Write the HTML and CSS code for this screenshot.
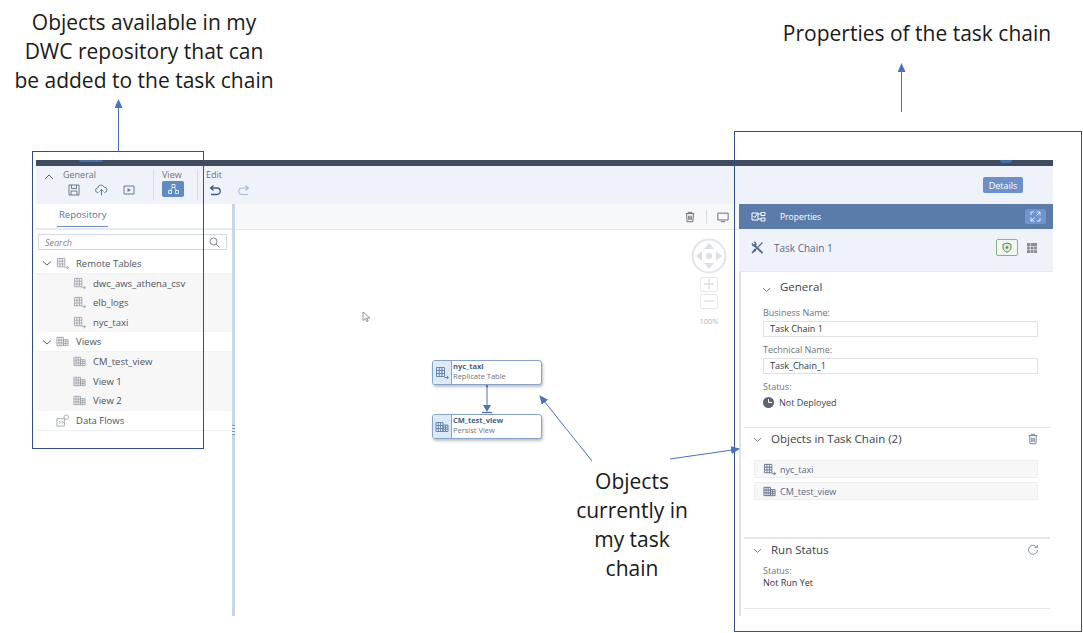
FILE: index.html
```html
<!DOCTYPE html>
<html lang="en">
<head>
  <meta charset="UTF-8" />
  <title>Task chain editor</title>
  <link rel="stylesheet" href="styles.css">
</head>
<body>
  <svg class="icon-defs" width="0" height="0">
    <symbol id="i-remote" viewBox="0 0 14 14">
      <path d="M1.5 1.5h8v9h-8zM1.5 4.5h8M1.500 7.5h8M4.200 1.500v9M6.900 1.500v9M9.500 11.500h4M11.800 9.800l1.700 1.700-1.700 1.700" fill="none" stroke="currentColor" stroke-width=".9"/>
    </symbol>
    <symbol id="i-view" viewBox="0 0 14 14">
      <path d="M1 2.500h7v9H1zM1 5.500h7M1 8.500h7M3.300 2.500v9M5.600 2.500v9M8 5h5v6.500H8zM8 7.200h5M8 9.300h5M10.500 5v6.500" fill="none" stroke="currentColor" stroke-width=".9"/>
    </symbol>
    <symbol id="i-flow" viewBox="0 0 14 14">
      <path d="M1 5h8v8H1zM3 7.500l2 1.500-2 1.500M6 7.500l2 1.500-2 1.500" fill="none" stroke="currentColor" stroke-width=".9"/>
      <circle cx="11" cy="3.500" r="2.400" fill="none" stroke="currentColor" stroke-width=".9"/>
    </symbol>
    <symbol id="i-trash" viewBox="0 0 14 14">
      <path d="M2 3h10M5 3V1.500h4V3M3 3l.6 9.500h6.800L11 3M5.500 5.500v5M7 5.500v5M8.500 5.500v5" fill="none" stroke="currentColor" stroke-width="1.100"/>
    </symbol>
    <symbol id="i-chevron" viewBox="0 0 10 10">
      <path d="M1 3.500l4 3.500 4-3.500" fill="none" stroke="currentColor" stroke-width="1"/>
    </symbol>
  </svg>

  <div class="app">
    <div class="shell-bar">
      <span class="shell-mark mark-left"></span>
      <span class="shell-mark mark-right"></span>
    </div>

    <div class="toolbar">
      <svg class="tool-chevron" width="10" height="10" viewBox="0 0 10 10"><path d="M1 7l4-4 4 4" fill="none" stroke="currentColor" stroke-width="1"/></svg>
      <div class="tool-group group-general">
        <span class="tool-label">General</span>
        <div class="tool-icons">
          <svg width="12" height="12" viewBox="0 0 12 12"><path d="M1 1h10v10H1zM3.500 1v3.500h5V1M3 11V7h6v4" fill="none" stroke="currentColor"/></svg>
          <svg width="13" height="12" viewBox="0 0 13 12"><path d="M3.500 8.500H3a2.300 2.300 0 0 1-.3-4.600 3.400 3.400 0 0 1 6.500-.7A2.700 2.700 0 0 1 10 8.500h-.5M6.500 11.500V5.500M4.500 7.500l2-2 2 2" fill="none" stroke="currentColor"/></svg>
          <svg width="12" height="12" viewBox="0 0 12 12"><path d="M1 2h10v8H1z" fill="none" stroke="currentColor"/><path d="M4.500 4l3.500 2-3.500 2z" fill="currentColor"/></svg>
        </div>
      </div>
      <div class="tool-group group-view">
        <span class="tool-label">View</span>
        <div class="tool-btn">
          <svg width="11" height="10" viewBox="0 0 11 10"><path d="M4 .5h3v3H4zM.5 6.500h3v3h-3zM7.500 6.500h3v3h-3zM4.500 3.500l-2 3M6.500 3.500l2 3" fill="none" stroke="currentColor" stroke-width=".8"/></svg>
        </div>
      </div>
      <div class="tool-group group-edit">
        <span class="tool-label">Edit</span>
        <div class="tool-icons">
          <svg class="undo" width="12" height="12" viewBox="0 0 12 12"><path d="M4.500 1.500L1.500 4l3 2.500M1.500 4H8a2.700 2.700 0 0 1 0 6.500H2" fill="none" stroke="currentColor" stroke-width="1.300"/></svg>
          <svg class="redo" width="12" height="12" viewBox="0 0 12 12"><path d="M7.500 1.500l3 2.500-3 2.500M10.500 4H4a2.700 2.700 0 0 0 0 6.500h6" fill="none" stroke="currentColor" stroke-width="1.100"/></svg>
        </div>
      </div>
      <button class="details-btn">Details</button>
    </div>

    <div class="workspace">
      <aside class="repo">
        <div class="repo-tabs"><span class="repo-tab">Repository</span></div>
        <div class="repo-search">
          <span>Search</span>
          <svg width="11" height="11" viewBox="0 0 11 11"><circle cx="4.500" cy="4.500" r="3.500" fill="none" stroke="currentColor"/><path d="M7 7l3.500 3.500" stroke="currentColor"/></svg>
        </div>
        <ul class="tree">
          <li class="tree-row parent">
            <svg class="tree-chevron"><use href="#i-chevron"/></svg>
            <svg class="tree-icon"><use href="#i-remote"/></svg>Remote Tables
          </li>
          <li class="tree-row child"><svg class="tree-icon"><use href="#i-remote"/></svg>dwc_aws_athena_csv</li>
          <li class="tree-row child"><svg class="tree-icon"><use href="#i-remote"/></svg>elb_logs</li>
          <li class="tree-row child"><svg class="tree-icon"><use href="#i-remote"/></svg>nyc_taxi</li>
          <li class="tree-row parent">
            <svg class="tree-chevron"><use href="#i-chevron"/></svg>
            <svg class="tree-icon"><use href="#i-view"/></svg>Views
          </li>
          <li class="tree-row child"><svg class="tree-icon"><use href="#i-view"/></svg>CM_test_view</li>
          <li class="tree-row child"><svg class="tree-icon"><use href="#i-view"/></svg>View 1</li>
          <li class="tree-row child"><svg class="tree-icon"><use href="#i-view"/></svg>View 2</li>
          <li class="tree-row parent no-chevron"><svg class="tree-icon"><use href="#i-flow"/></svg>Data Flows</li>
        </ul>
        <span class="repo-grip"></span>
      </aside>

      <main class="canvas">
        <div class="canvas-bar">
          <svg class="bar-icon"><use href="#i-trash"/></svg>
          <span class="bar-sep"></span>
          <svg class="bar-icon" viewBox="0 0 14 14"><path d="M1 2.500h12v8H1zM4.500 12.500h5" fill="none" stroke="currentColor" stroke-width="1.100"/></svg>
        </div>

        <div class="nav-control">
          <svg width="36" height="36" viewBox="0 0 36 36">
            <circle cx="18" cy="18" r="16.500" fill="#fff" stroke="#e3e5e8" stroke-width="2"/>
            <path d="M18 5l5 6H13zM18 31l5-6H13zM5 18l6-5v10zM31 18l-6-5v10z" fill="#dcdfe3"/>
            <circle cx="18" cy="18" r="3" fill="#dcdfe3"/>
          </svg>
          <div class="zoom-btn">
            <svg width="12" height="12" viewBox="0 0 12 12"><path d="M6 1v10M1 6h10" stroke="#dcdfe3" stroke-width="1.400"/></svg>
          </div>
          <div class="zoom-btn">
            <svg width="12" height="12" viewBox="0 0 12 12"><path d="M1 6h10" stroke="#dcdfe3" stroke-width="1.400"/></svg>
          </div>
          <span class="zoom-level">100%</span>
        </div>

        <div class="flow">
          <div class="node">
            <div class="node-icon"><svg width="14" height="14"><use href="#i-remote"/></svg></div>
            <div class="node-text"><b>nyc_taxi</b><span>Replicate Table</span></div>
          </div>
          <svg class="link" width="12" height="29" viewBox="0 0 12 29">
            <circle cx="6" cy="1" r="1.200" fill="#4f74ad"/>
            <path d="M6 1v22" stroke="#4f74ad"/>
            <path d="M2 20h8L6 27z" fill="#4f74ad"/>
            <path d="M1 27.500h10" stroke="#4f74ad" stroke-width="1.400"/>
          </svg>
          <div class="node">
            <div class="node-icon"><svg width="14" height="14"><use href="#i-view"/></svg></div>
            <div class="node-text"><b>CM_test_view</b><span>Persist View</span></div>
          </div>
        </div>

        <svg class="cursor" width="10" height="12" viewBox="0 0 10 12"><path d="M1 1v8.500l2.300-2 1.600 3.200 1.300-.7-1.600-3H8z" fill="#fff" stroke="#7a7f86" stroke-width=".8"/></svg>
      </main>

      <aside class="props">
        <header class="props-head">
          <svg class="props-head-icon" width="16" height="14" viewBox="0 0 16 14"><path d="M1 3h6v7H1zM2.500 6l1.300 1.500L6.500 3.500M7 4h3M7 9h3M10 2.500h4v3h-4zM10 8h4v3h-4z" fill="none" stroke="currentColor"/></svg>
          <span>Properties</span>
          <div class="expand-btn">
            <svg width="11" height="11" viewBox="0 0 11 11"><path d="M6.500 1H10v3.500M10 1L6.500 4.500M4.500 10H1V6.500M1 10l3.500-3.500M1 4V1h3M10 7v3H7" fill="none" stroke="currentColor" stroke-width=".8"/></svg>
          </div>
        </header>
        <div class="props-sub">
          <svg class="tools-icon" width="13" height="13" viewBox="0 0 13 13">
            <path d="M3.500 4.500l8 7.500" fill="none" stroke="currentColor" stroke-width="1.800"/>
            <path d="M1 1.800l1.800 1.700L4 2.400 2.300.7A2.600 2.600 0 0 1 5.500 4L4 5.500A2.600 2.600 0 0 1 1 1.800z" fill="currentColor"/>
            <path d="M11.500 1.500L3 10M1 12l2.500-3.500 1 1z" fill="none" stroke="currentColor" stroke-width="1.200"/>
          </svg>
          <span class="props-title">Task Chain 1</span>
          <div class="deploy-badge">
            <svg width="10" height="11" viewBox="0 0 10 11"><path d="M5 1l4 1.300V6c0 2-2 3.500-4 4.200C3 9.500 1 8 1 6V2.300z" fill="#dfe9d8" stroke="#5f8a4c"/><circle cx="5" cy="5.500" r="1.300" fill="#5f8a4c"/></svg>
          </div>
          <svg class="grid-icon" width="10" height="10" viewBox="0 0 10 10"><path d="M0 0h10v10H0z" fill="#8a9099"/><path d="M3.500 0v10M0 3.500h10M0 6.700h10M6.700 3.500v6.500" stroke="#eff3f9" stroke-width=".6"/></svg>
        </div>

        <section class="sect sect-general">
          <h3 class="sect-title"><svg class="sect-chevron"><use href="#i-chevron"/></svg>General</h3>
          <label class="field-label">Business Name:</label>
          <div class="field-input">Task Chain 1</div>
          <label class="field-label">Technical Name:</label>
          <div class="field-input">Task_Chain_1</div>
          <label class="field-label status-label">Status:</label>
          <div class="status-value">
            <svg width="11" height="11" viewBox="0 0 11 11"><circle cx="5.500" cy="5.500" r="5.500" fill="#5b6470"/><path d="M5.500 2v3.500h3.500" fill="none" stroke="#fff"/></svg>
            Not Deployed
          </div>
        </section>

        <section class="sect sect-objects">
          <h3 class="sect-title">
            <svg class="sect-chevron"><use href="#i-chevron"/></svg>Objects in Task Chain (2)
            <svg class="sect-action"><use href="#i-trash"/></svg>
          </h3>
          <div class="object-row"><svg class="object-icon"><use href="#i-remote"/></svg>nyc_taxi</div>
          <div class="object-row"><svg class="object-icon"><use href="#i-view"/></svg>CM_test_view</div>
        </section>

        <section class="sect sect-run">
          <h3 class="sect-title">
            <svg class="sect-chevron"><use href="#i-chevron"/></svg>Run Status
            <svg class="sect-action" viewBox="0 0 14 14"><path d="M11.500 4A5.300 5.300 0 1 0 12.300 7M12 1v3.200H8.800" fill="none" stroke="currentColor"/></svg>
          </h3>
          <label class="field-label">Status:</label>
          <div class="run-value">Not Run Yet</div>
        </section>
      </aside>
    </div>
  </div>

  <!-- slide callouts drawn over the screenshot -->
  <p class="note note-repo">Objects available in my<br>DWC repository that can<br>be added to the task chain</p>
  <p class="note note-props">Properties of the task chain</p>
  <p class="note note-current">Objects<br>currently in<br>my task<br>chain</p>

  <div class="callout-box box-repo"></div>
  <div class="callout-box box-props"></div>

  <svg class="arrows" width="1083" height="633" viewBox="0 0 1083 633">
    <defs>
      <marker id="head" markerWidth="9" markerHeight="8" refX="8" refY="4" orient="auto" markerUnits="userSpaceOnUse">
        <path d="M0 0l9 4-9 4z" fill="#4472c4"/>
      </marker>
    </defs>
    <g stroke="#4472c4" fill="none">
      <path d="M118.500 151V100" marker-end="url(#head)"/>
      <path d="M901.500 112V64" marker-end="url(#head)"/>
      <path d="M592 461L540 396" marker-end="url(#head)"/>
      <path d="M670 459L739 449" marker-end="url(#head)"/>
    </g>
  </svg>
</body>
</html>
```

FILE: styles.css
```css
* {
  box-sizing: border-box;
}
html, body {
  margin: 0;
  height: 100%;
}
body {
  position: relative;
  width: 1083px;
  height: 633px;
  overflow: hidden;
  background: white;
  font-family: "Open Sans", "Liberation Sans", sans-serif;
  font-size: 9.5px;
  color: #4a5361;
}
.icon-defs {
  position: absolute;
}

/* app screenshot */
.app {
  display: flex;
  flex-direction: column;
  width: 1017px;
  height: 456px;
  margin: 160px 0 0 36px;
}
.shell-bar {
  position: relative;
  flex: none;
  height: 6px;
  background: #3f4b5e;
}
.shell-mark {
  position: absolute;
  top: 0;
  height: 2px;
  border-radius: 0 0 6px 6px;
  background: #3f6fb5;
}
.mark-left {
  left: 43px;
  width: 24px;
}
.mark-right {
  left: 964px;
  width: 12px;
  height: 3px;
}

.toolbar {
  flex: none;
  display: flex;
  height: 38px;
  padding: 3px 30px 0 8px;
  background: #eff3f9;
}
.tool-chevron {
  margin: 3px 8px 0 0;
  color: #5a6472;
}
.tool-group {
  display: flex;
  flex-direction: column;
  height: 31px;
  border-right: 1px solid #d8dde5;
}
.tool-label {
  font-size: 9px;
  line-height: 11px;
  color: #6d7480;
}
.tool-icons {
  display: flex;
  align-items: center;
  margin-top: 4px;
  color: #6a7b90;
}
.group-general {
  width: 91px;
  margin-left: 1px;
}
.group-general .tool-icons {
  gap: 15px;
  padding-left: 5px;
}
.group-view {
  width: 44px;
  padding-left: 8px;
}
.tool-btn {
  display: flex;
  align-items: center;
  justify-content: center;
  width: 22px;
  height: 16px;
  margin-top: 1px;
  border-radius: 2px;
  background: #5f8ac6;
  color: white;
}
.group-edit {
  width: 60px;
  padding-left: 8px;
  border: none;
}
.group-edit .tool-icons {
  gap: 17px;
  padding-left: 3px;
}
.undo {
  color: #3e5c86;
}
.redo {
  color: #a9bbd3;
}
.details-btn {
  height: 16px;
  width: 40px;
  margin: 8px 0 0 auto;
  padding: 0;
  border: none;
  border-radius: 2px;
  background: #6a91cb;
  color: white;
  font: 9px "Open Sans", sans-serif;
}

.workspace {
  flex: 1;
  display: flex;
  min-height: 0;
}

/* repository panel */
.repo {
  position: relative;
  flex: none;
  width: 199px;
  border-right: 3px solid #c9d6e8;
  background: white;
}
.repo-grip {
  position: absolute;
  top: 221px;
  right: -3px;
  width: 3px;
  height: 10px;
  background: repeating-linear-gradient(#8a94a3 0 1px, #e8ecf1 1px 3px);
}
.repo-tabs {
  height: 26px;
  padding-left: 21px;
  border-bottom: 2px solid #e6ebf2;
}
.repo-tab {
  display: inline-block;
  height: 23px;
  padding: 4px 2px 0;
  border-bottom: 1px solid #6f8fbd;
  font-size: 9.500px;
  color: #55729f;
}
.repo-search {
  display: flex;
  align-items: center;
  justify-content: space-between;
  width: 189px;
  height: 16px;
  margin: 4px 0 4px 2px;
  padding: 0 6px;
  border: 1px solid #d5d9df;
  background: white;
  font-style: italic;
  font-size: 9px;
  color: #7b838e;
}
.tree {
  list-style: none;
  margin: 0;
  padding: 0;
  border-bottom: 1px solid #edf0f3;
}
.tree-row {
  display: flex;
  align-items: center;
  height: 19.600px;
}
.tree-row.parent {
  padding-left: 6px;
  border-bottom: 1px solid #f0f2f5;
  background: white;
}
.tree-row.child {
  padding-left: 37px;
  background: #f7f7f7;
}
.tree-row.no-chevron {
  padding-left: 20px;
  border: none;
}
.tree-chevron {
  width: 10px;
  height: 10px;
  margin-right: 4px;
  color: #5a6472;
}
.tree-icon {
  width: 13px;
  height: 13px;
  margin-right: 7px;
  color: #9aa0a8;
}

/* canvas */
.canvas {
  position: relative;
  flex: none;
  width: 504px;
  background: white;
}
.canvas-bar {
  display: flex;
  align-items: center;
  justify-content: flex-end;
  height: 26px;
  padding-right: 10px;
  border-bottom: 1px solid #e3e7ec;
  background: #f7f8fa;
  color: #5f6b7a;
}
.bar-icon {
  width: 12px;
  height: 12px;
}
.bar-sep {
  width: 1px;
  height: 14px;
  margin: 0 10px;
  background: #d9dde2;
}
.nav-control {
  position: absolute;
  top: 34px;
  left: 456px;
  display: flex;
  flex-direction: column;
  align-items: center;
  width: 36px;
}
.zoom-btn {
  display: flex;
  align-items: center;
  justify-content: center;
  width: 18px;
  height: 15px;
  margin-top: 2px;
  border: 1px solid #e6e8eb;
  border-radius: 2px;
}
.nav-control svg:first-child {
  margin-bottom: 1px;
}
.zoom-level {
  margin-top: 7px;
  font-size: 7.500px;
  color: #a9b6c8;
}
.flow {
  position: absolute;
  top: 156px;
  left: 197px;
  display: flex;
  flex-direction: column;
  align-items: center;
  width: 110px;
}
.node {
  display: flex;
  width: 110px;
  height: 25px;
  border: 1px solid #86a3c9;
  border-radius: 3px;
  background: white;
  box-shadow: 1px 2px 3px rgba(0, 0, 0, 0.25);
  overflow: hidden;
}
.node-icon {
  display: flex;
  align-items: center;
  justify-content: center;
  flex: none;
  width: 19px;
  border-right: 1px solid #86a3c9;
  background: #dce9f6;
  color: #5d7ea8;
}
.node-text {
  display: flex;
  flex-direction: column;
  padding: 1px 0 0 1px;
  font-size: 7.500px;
  line-height: 9.500px;
  color: #6d7480;
}
.node-text b {
  color: #3f5f8f;
}
.link {
  display: block;
  margin-left: -1px;
}
.cursor {
  position: absolute;
  top: 107px;
  left: 127px;
}

/* properties panel */
.props {
  flex: none;
  width: 314px;
  border-left: 2px solid #dfe1e4;
  background: white;
}
.props-head {
  display: flex;
  align-items: center;
  height: 25px;
  margin-left: -2px;
  padding: 0 7px 0 12px;
  background: #5b7cab;
  color: white;
  font-size: 8.500px;
}
.props-head-icon {
  margin-right: 13px;
}
.expand-btn {
  display: flex;
  align-items: center;
  justify-content: center;
  width: 21px;
  height: 15px;
  margin-left: auto;
  border-radius: 2px;
  background: #6f95cf;
}
.props-sub {
  display: flex;
  align-items: center;
  height: 43px;
  margin-left: -2px;
  padding: 0 16px 5px 12px;
  border-bottom: 1px solid #e6eaf0;
  background: #eff3f9;
  color: #55698a;
}
.tools-icon {
  margin-right: 10px;
}
.props-title {
  font-size: 10px;
}
.deploy-badge {
  display: flex;
  align-items: center;
  justify-content: center;
  width: 22px;
  height: 17px;
  margin-left: auto;
  border: 1px solid #8fb07e;
  border-radius: 2px;
  background: #f2f7ef;
}
.grid-icon {
  margin-left: 9px;
}

.sect {
  margin-left: 3px;
  margin-right: 3px;
  border-bottom: 1px solid #e4e6e9;
}
.sect-title {
  position: relative;
  display: flex;
  align-items: center;
  margin: 0;
  font-weight: normal;
  font-size: 11.500px;
  line-height: 14px;
  color: #3a414c;
}
.sect-chevron {
  flex: none;
  width: 9px;
  height: 9px;
  margin-right: 9px;
  color: #6d7480;
}
.sect-action {
  width: 12px;
  height: 12px;
  margin-left: auto;
  margin-right: 11px;
  color: #6f8096;
}
.sect-general {
  height: 156px;
  padding: 7px 0 0 19px;
}
.sect-general .sect-title {
  margin-left: -1px;
  margin-bottom: 13px;
}
.sect-general .sect-chevron {
  margin-top: 6px;
}
.field-label {
  display: block;
  font-size: 9px;
  line-height: 12px;
  color: #6d7480;
}
.field-input {
  width: 275px;
  height: 16px;
  margin: 2px 0 7px;
  padding-left: 6px;
  border: 1px solid #dfe1e4;
  font-size: 9px;
  line-height: 14px;
  color: #2f353d;
}
.status-label {
  margin-top: 6px;
}
.status-value {
  display: flex;
  align-items: center;
  gap: 5px;
  margin-top: 3px;
  font-size: 9px;
  color: #3a414c;
}
.sect-objects {
  height: 111px;
  padding: 4px 0 0 9px;
  border-bottom-width: 2px;
}
.sect-objects .sect-title {
  margin-bottom: 14px;
}
.object-row {
  display: flex;
  align-items: center;
  width: 284px;
  height: 18px;
  margin: 0 0 4px 1px;
  padding-left: 8px;
  border: 1px solid #eceef0;
  background: #f7f7f7;
  font-size: 9px;
  color: #55698a;
}
.object-icon {
  width: 13px;
  height: 13px;
  margin-right: 4px;
}
.sect-run {
  height: 70px;
  padding: 4px 0 0 9px;
}
.sect-run .sect-title {
  margin-bottom: 8px;
}
.sect-run .field-label,
.run-value {
  margin-left: 10px;
}
.run-value {
  font-size: 9px;
  line-height: 12px;
  color: #2f353d;
}

/* slide callouts */
.note {
  position: absolute;
  margin: 0;
  font-size: 21px;
  line-height: 29px;
  text-align: center;
  color: #1a1a1a;
}
.note-repo {
  top: 8px;
  left: 0;
  width: 288px;
}
.note-props {
  top: 19px;
  left: 767px;
  width: 300px;
}
.note-current {
  top: 467px;
  left: 552px;
  width: 160px;
}
.callout-box {
  position: absolute;
  border: 1px solid #2f528f;
}
.box-repo {
  top: 151px;
  left: 32px;
  width: 172px;
  height: 298px;
}
.box-props {
  top: 131px;
  left: 734px;
  width: 348px;
  height: 501px;
}
.arrows {
  position: absolute;
  top: 0;
  left: 0;
}
```
